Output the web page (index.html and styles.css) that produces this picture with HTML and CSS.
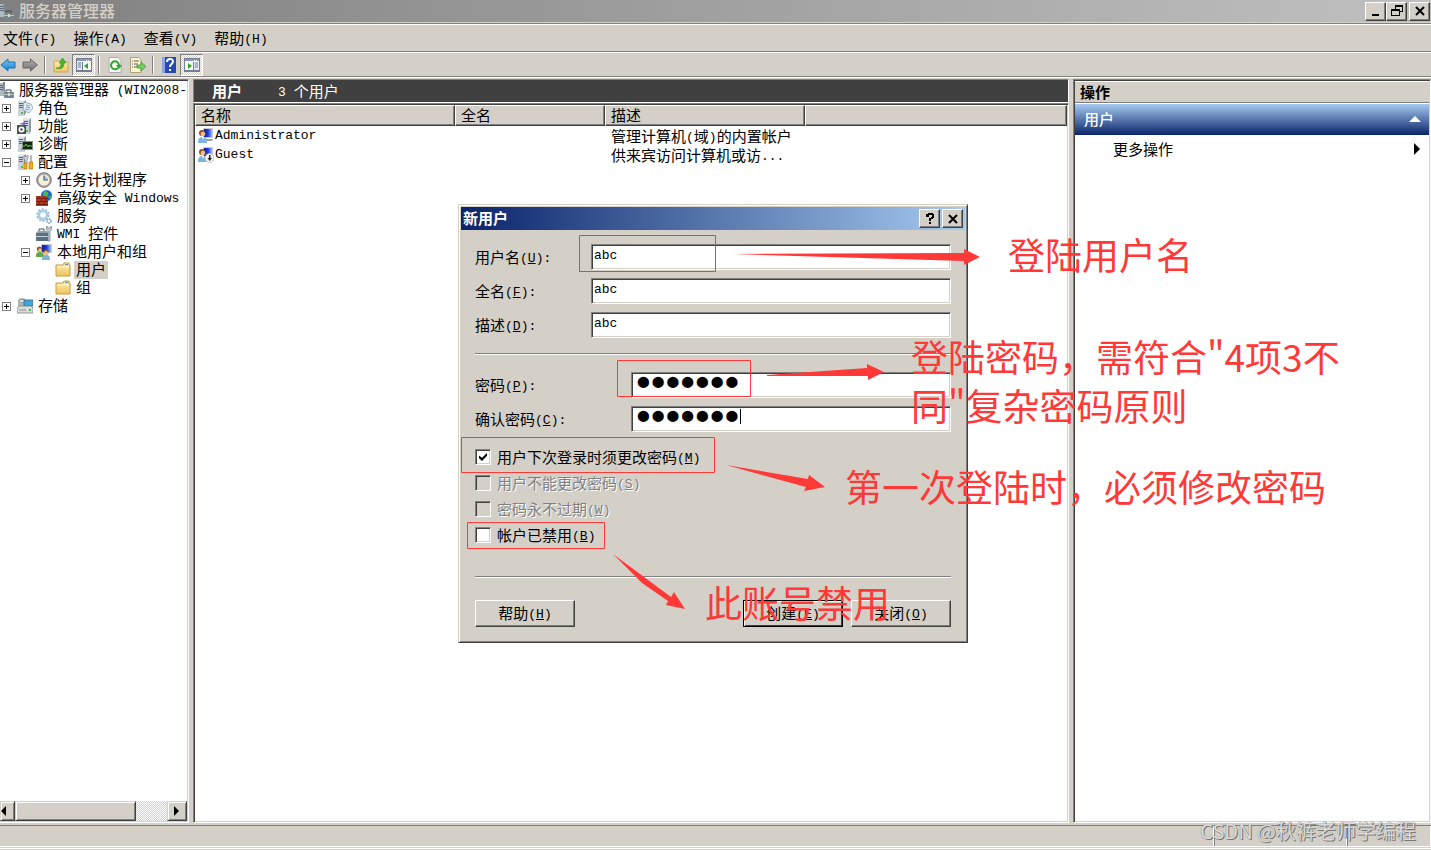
FILE: index.html
```html
<!DOCTYPE html>
<html lang="zh-CN">
<head>
<meta charset="utf-8">
<title>服务器管理器</title>
<link rel="stylesheet" href="styles.css">
</head>
<body>
<svg class="defs" aria-hidden="true">
  <defs>
    <linearGradient id="gBlue" x1="0" y1="0" x2="0" y2="1"><stop offset="0" stop-color="#7cc8f4"/><stop offset="1" stop-color="#0b7fd4"/></linearGradient>
    <linearGradient id="gGray" x1="0" y1="0" x2="0" y2="1"><stop offset="0" stop-color="#b4b4b4"/><stop offset="1" stop-color="#6c6c6c"/></linearGradient>
    <linearGradient id="gFolder" x1="0" y1="0" x2="0" y2="1"><stop offset="0" stop-color="#fdeeb0"/><stop offset="1" stop-color="#efc460"/></linearGradient>
    <linearGradient id="gScreen" x1="0" y1="0" x2="1" y2="0"><stop offset="0" stop-color="#0a1ca0"/><stop offset=".5" stop-color="#1c3ce0"/><stop offset="1" stop-color="#9cc0f8"/></linearGradient>
    <symbol id="tower" viewBox="0 0 16 16">
      <path d="M1 2l2-2h6v13l-2 3H1z" fill="#8e9aa4"/><path d="M1 2h6v14H1z" fill="#c9d2d8"/><path d="M2 3h4v1H2zM2 5h4v1H2zM2 7h4v1H2z" fill="#5a6872"/><path d="M4 12h2v2H4z" fill="#35d02a"/><path d="M3 0h6l-2 2H1z" fill="#e6ebee"/>
    </symbol>
    <symbol id="manager" viewBox="0 0 16 16">
      <path d="M0 1h7v13H0z" fill="#aeb9c1"/><path d="M1 3h5v1H1zM1 5h5v1H1zM1 7h5v1H1z" fill="#5a6872"/><path d="M5 0h2v9H5z" fill="#7f8c96"/>
      <path d="M8 10V8h5v2" fill="none" stroke="#3f4b54"/><rect x="6" y="10" width="10" height="6" rx="1" fill="#708694"/><path d="M6 12h10v1H6z" fill="#b8c7d0"/><path d="M10 11h2v3h-2z" fill="#e8d8a0"/>
    </symbol>
    <symbol id="person" viewBox="0 0 16 16">
      <path d="M5 0h10v10H5z" fill="#c8ccd4"/><path d="M6 1h8v8H6z" fill="url(#gScreen)"/><path d="M8 11h7l-1 2H8z" fill="#9aa0a8"/>
      <circle cx="4" cy="5" r="3" fill="#8c5424"/><circle cx="5" cy="6" r="2.3" fill="#f0bc8c"/><path d="M0 15c0-5 2-6 4.500-6S9 10 9 15z" fill="#7cb4e0"/><path d="M4 9l1 3 1-3z" fill="#fff"/>
    </symbol>
    <symbol id="folder" viewBox="0 0 16 16">
      <path d="M1 3h7l1-2h5v2h1v11H1z" fill="url(#gFolder)" stroke="#c79a3c"/><path d="M10 2h3v1h-3z" fill="#3b9ae0"/><path d="M2 5h12" stroke="#fff6cf"/>
    </symbol>
    <symbol id="console" viewBox="0 0 16 16">
      <path d="M0 2h16v12H0z" fill="#f7f9fc" stroke="#71809a" stroke-width="2"/><path d="M1 2h14v2H1z" fill="#8798b4"/><path d="M10 3h1v1h-1zM12 3h1v1h-1z" fill="#fff"/>
    </symbol>
  </defs>
</svg>

<div class="app">
  <header class="titlebar">
    <svg class="icon root-icon"><use href="#manager"/></svg>
    <h1>服务器管理器</h1>
    <div class="winbtns">
      <button class="cap" aria-label="最小化"><svg viewBox="0 0 12 12"><path d="M2 9h7v2H2z"/></svg></button>
      <button class="cap" aria-label="还原"><svg viewBox="0 0 12 12"><path d="M4 0h8v7H9V6h2V2H5v2H4zM0 4h9v7H0zm1 2v4h7V6z" fill-rule="evenodd"/></svg></button>
      <button class="cap cap-close" aria-label="关闭"><svg viewBox="0 0 12 12"><path d="M2 2l8 8M10 2l-8 8" stroke="#000" stroke-width="2"/></svg></button>
    </div>
  </header>

  <nav class="menubar">
    <button>文件<i>(F)</i></button><button>操作<i>(A)</i></button><button>查看<i>(V)</i></button><button>帮助<i>(H)</i></button>
  </nav>

  <div class="toolbar">
    <button class="tool first" aria-label="后退"><svg class="icon" viewBox="0 0 16 16"><path d="M1 8l7-6v3h7v6H8v3z" fill="url(#gBlue)" stroke="#1e6fb4"/></svg></button>
    <button class="tool" aria-label="前进"><svg class="icon" viewBox="0 0 16 16"><path d="M15.500 8l-7-6v3H1v6h7.500v3z" fill="url(#gGray)" stroke="#686868"/></svg></button>
    <span class="sep"></span>
    <button class="tool" aria-label="上移一级"><svg class="icon" viewBox="0 0 16 16"><path d="M1 4h6l1 1h7v10H1z" fill="url(#gFolder)" stroke="#d0a550"/><path d="M3 11c4 0 5-2 5-5H6l3.500-5L13 6h-2c0 5-3 7-8 5z" fill="#45b82c" stroke="#278414" stroke-width=".5"/></svg></button>
    <button class="tool on" aria-label="显示控制台树"><svg class="icon" viewBox="0 0 16 16"><use href="#console"/><path d="M1 5h5v8H1z" fill="#dfe6f0"/><path d="M2 6h3M2 8h3M2 10h3M6.500 5v8" stroke="#71809a"/><path d="M12 6v6L8 9z" fill="#35a51d"/></svg></button>
    <span class="sep"></span>
    <button class="tool" aria-label="刷新"><svg class="icon" viewBox="0 0 16 16"><path d="M2 .5h9l3 3v12H2z" fill="#fbfbfb" stroke="#aaa"/><path d="M11 11a4 4 0 1 1 1-3" fill="none" stroke="#2fa52a" stroke-width="2"/><path d="M9 8h6l-3 4z" fill="#2fa52a"/></svg></button>
    <button class="tool" aria-label="导出列表"><svg class="icon" viewBox="0 0 16 16"><path d="M.5.5H9l2 2v13H.5z" fill="#fdf6cf" stroke="#a9a17a"/><path d="M2 4h1M2 7h1M2 10h1M4 4h5M4 7h4M4 10h4" stroke="#5b5b66"/><path d="M7 8h4V5l5 4.500-5 4.500v-3H7z" fill="#6fd45a" stroke="#2f9a20" stroke-width=".7"/></svg></button>
    <span class="sep"></span>
    <button class="tool" aria-label="帮助"><svg class="icon" viewBox="0 0 16 16"><path d="M1 0h14v16H1z" fill="#2448b4"/><path d="M1 0h3v16H1z" fill="#8ca4e4"/><path d="M6 5c0-4 6-4 6-.5C12 7 9 7 9 10" fill="none" stroke="#fff" stroke-width="2"/><path d="M8 12h2v2H8z" fill="#fff"/></svg></button>
    <button class="tool on" aria-label="显示操作窗格"><svg class="icon" viewBox="0 0 16 16"><use href="#console"/><path d="M10 5h5v8h-5z" fill="#dfe6f0"/><path d="M11 6h3M11 8h3M11 10h3M9.500 5v8" stroke="#71809a"/><path d="M4 6v6l4-3z" fill="#35a51d"/></svg></button>
  </div>

  <main class="panes">
    <section class="pane tree-pane">
      <div class="tree">
        <div class="node"><svg class="icon root-icon"><use href="#manager"/></svg><span>服务器管理器<i> (WIN2008-</i></span></div>
        <ul>
          <li><div class="node"><button class="exp" aria-label="展开"></button><svg class="icon" viewBox="0 0 16 16"><use href="#tower"/><path d="M7 2l7 2 2 4-4 5-6-3z" fill="#e4eff8" stroke="#7c9cb8" stroke-width=".8"/><path d="M9 5l4 1M9 7l4 1M8 9l4 1" stroke="#5c8cb8" stroke-width=".8"/></svg><span>角色</span></div></li>
          <li><div class="node"><button class="exp" aria-label="展开"></button><svg class="icon" viewBox="0 0 16 16"><use href="#tower" x="5"/><path d="M0 7h9v9H0z" fill="#4a4f58"/><circle cx="4.500" cy="11.500" r="3" fill="#fff"/><circle cx="4.500" cy="11.500" r="1.200" fill="#4a4f58"/><path d="M2 6l6-2v3" fill="#7c64b8"/></svg><span>功能</span></div></li>
          <li><div class="node"><button class="exp" aria-label="展开"></button><svg class="icon" viewBox="0 0 16 16"><use href="#tower"/><path d="M5 5h11v9H5z" fill="#8b8f80"/><path d="M6 6h9v7H6z" fill="#142012"/><path d="M6 10h2l1-2 2 3 1-2 1 1h2" fill="none" stroke="#4fd03a"/></svg><span>诊断</span></div></li>
          <li><div class="node"><button class="exp open" aria-label="折叠"></button><svg class="icon" viewBox="0 0 16 16"><use href="#tower"/><path d="M7 1l2 2 2-2v4l-1 1v4H8V6L7 5z" fill="#d0d4d8" stroke="#70767c" stroke-width=".6"/><path d="M13 1h2v8h-2z" fill="#b8bcc0"/><path d="M7 9h3v6H7zM12 8h4v7h-4z" fill="#f0b018" stroke="#a86c08" stroke-width=".6"/></svg><span>配置</span></div>
            <ul>
              <li><div class="node"><button class="exp" aria-label="展开"></button><svg class="icon" viewBox="0 0 16 16"><circle cx="8" cy="8" r="7.300" fill="#a8a8a8" stroke="#777"/><circle cx="8" cy="8" r="5.500" fill="#f4f0dc"/><path d="M8 8h4a4 4 0 0 0-4-4z" fill="#a8ccec"/><path d="M8 3.500V8h4" fill="none" stroke="#4c5c70" stroke-width="1.200"/></svg><span>任务计划程序</span></div></li>
              <li><div class="node"><button class="exp" aria-label="展开"></button><svg class="icon" viewBox="0 0 16 16"><circle cx="10.500" cy="5.500" r="5.500" fill="#1c68c8"/><path d="M8 1c3 0 5 1 4 4s-4 3-5 0zM12 7l4-2-1 4z" fill="#4cb848"/><path d="M0 6h10l2 2v8H0z" fill="#b03c24"/><path d="M0 8.500h12M0 11.500h12M0 14.500h12M3 6v2M8 6v2M5 9v2M10 9v2M3 12v2M8 12v2" stroke="#6c1c10" stroke-width=".9"/></svg><span>高级安全<i> Windows</i></span></div></li>
              <li><div class="node"><b class="noexp"></b><svg class="icon" viewBox="0 0 16 16"><circle cx="7" cy="7" r="5.500" fill="none" stroke="#9cc0d8" stroke-width="2.500" stroke-dasharray="2.200 1.200"/><circle cx="7" cy="7" r="4" fill="none" stroke="#a8cce0" stroke-width="2.500"/><circle cx="13" cy="13" r="2" fill="none" stroke="#90b0c8" stroke-width="1.800" stroke-dasharray="1.500 .6"/></svg><span>服务</span></div></li>
              <li><div class="node"><b class="noexp"></b><svg class="icon" viewBox="0 0 16 16"><path d="M0 7h12v8H0z" fill="#5c6f80"/><path d="M0 7l2-2h9l1 2z" fill="#90a0ae"/><path d="M3 5V3h5v2" fill="none" stroke="#44525e"/><path d="M0 10h12v1H0z" fill="#c8d4dc"/><path d="M11 0l1 2h2l1-2 1 3-2 2v10h-2V5l-2-2z" fill="#c4ccd4" stroke="#5c6c80" stroke-width=".6"/></svg><span><i>WMI </i>控件</span></div></li>
              <li><div class="node"><button class="exp open" aria-label="折叠"></button><svg class="icon" viewBox="0 0 16 16"><path d="M5 0h11v9H5z" fill="#c8ccd4"/><path d="M6 1h9v7H6z" fill="url(#gScreen)"/><circle cx="3.500" cy="5" r="2.600" fill="#8c5424"/><circle cx="4" cy="6" r="1.800" fill="#f0bc8c"/><path d="M0 13c0-4 1-5 3.500-5S8 9 8 13z" fill="#60a840"/><circle cx="10" cy="8" r="2.600" fill="#8c5424"/><circle cx="10" cy="9" r="2" fill="#f0bc8c"/><path d="M6 16c0-4 1-5 4-5s4 1 4 5z" fill="#7cb4e0"/></svg><span>本地用户和组</span></div>
                <ul>
                  <li><div class="node"><b class="noexp"></b><svg class="icon"><use href="#folder"/></svg><span class="selected">用户</span></div></li>
                  <li><div class="node"><b class="noexp"></b><svg class="icon"><use href="#folder"/></svg><span>组</span></div></li>
                </ul>
              </li>
            </ul>
          </li>
          <li><div class="node"><button class="exp" aria-label="展开"></button><svg class="icon" viewBox="0 0 16 16"><path d="M1 3c0-4 8-4 8 0v6H1z" fill="#b0b8bc"/><ellipse cx="5" cy="3" rx="3" ry="1.500" fill="#e8ecee" stroke="#6c7478" stroke-width=".6"/><path d="M7 2h9v6H7z" fill="#38a8dc" stroke="#48606c" stroke-width=".8"/><path d="M0 10l2-2h12l2 2v5H0z" fill="#d8dcdc" stroke="#7c8484" stroke-width=".8"/><path d="M2 12h7" stroke="#8c9494"/><path d="M12 11h2v2h-2z" fill="#35d02a"/></svg><span>存储</span></div></li>
        </ul>
      </div>
      <div class="hscroll">
        <button class="sb sb-left" aria-label="向左滚动"><svg viewBox="0 0 6 10"><path d="M5 0v10L0 5z"/></svg></button>
        <div class="thumb"></div><div class="track"></div>
        <button class="sb" aria-label="向右滚动"><svg viewBox="0 0 6 10"><path d="M0 0v10l5-5z"/></svg></button>
      </div>
    </section>

    <section class="center">
      <div class="center-head"><strong>用户</strong><span><i>3 </i>个用户</span></div>
      <div class="pane list">
        <table>
          <colgroup><col class="c-name"><col class="c-full"><col class="c-desc"><col></colgroup>
          <thead><tr><th>名称</th><th>全名</th><th>描述</th><th></th></tr></thead>
          <tbody>
            <tr><td><svg class="icon"><use href="#person"/></svg><i>Administrator</i></td><td></td><td>管理计算机<i>(</i>域<i>)</i>的内置帐户</td><td></td></tr>
            <tr><td><svg class="icon" viewBox="0 0 16 16"><use href="#person"/><circle cx="11.500" cy="11" r="4.500" fill="#f4f4f4" stroke="#aaa" stroke-width=".6"/><path d="M11 8h1.500v3H14l-2.300 3L9.500 11H11z" fill="#222"/></svg><i>Guest</i></td><td></td><td>供来宾访问计算机或访<i>...</i></td><td></td></tr>
          </tbody>
        </table>
      </div>
    </section>

    <aside class="pane actions">
      <h2>操作</h2>
      <button class="group"><span>用户</span><svg class="up" viewBox="0 0 12 6"><path d="M6 0l6 6H0z"/></svg></button>
      <button class="more"><span>更多操作</span><svg class="right" viewBox="0 0 6 12"><path d="M0 0v12l6-6z"/></svg></button>
    </aside>
  </main>

  <footer class="status"><span></span><span></span><span></span></footer>
</div>

<form class="dialog" role="dialog" aria-label="新用户">
  <div class="dlg-title">
    <h2>新用户</h2>
    <button type="button" class="cap" aria-label="帮助"><svg viewBox="0 0 12 12"><path d="M2 1h2V0h5v1h1v4H9v1H7v2H5V5h2V4h1V2H5v2H2zM5 9h2v2H5z"/></svg></button>
    <button type="button" class="cap" aria-label="关闭"><svg viewBox="0 0 12 12"><path d="M2 2l8 8M10 2l-8 8" stroke="#000" stroke-width="2"/></svg></button>
  </div>
  <div class="dlg-body">
    <div class="field"><label for="user">用户名<i>(<u>U</u>):</i></label><input id="user" type="text" value="abc"></div>
    <div class="field"><label for="full">全名<i>(<u>F</u>):</i></label><input id="full" type="text" value="abc"></div>
    <div class="field"><label for="desc">描述<i>(<u>D</u>):</i></label><input id="desc" type="text" value="abc"></div>
    <hr>
    <div class="field pw"><label for="pass">密码<i>(<u>P</u>):</i></label><input id="pass" type="password" value="abcdefg"></div>
    <div class="field pw"><label for="pass2">确认密码<i>(<u>C</u>):</i></label><input id="pass2" type="password" value="abcdefg"><span class="caret"></span></div>
    <div class="checks">
      <label><input type="checkbox" checked><span>用户下次登录时须更改密码<i>(<u>M</u>)</i></span></label>
      <label class="off"><input type="checkbox" disabled><span>用户不能更改密码<i>(<u>S</u>)</i></span></label>
      <label class="off"><input type="checkbox" disabled><span>密码永不过期<i>(<u>W</u>)</i></span></label>
      <label><input type="checkbox"><span>帐户已禁用<i>(<u>B</u>)</i></span></label>
    </div>
    <hr>
    <div class="buttons">
      <button type="button" class="btn">帮助<i>(<u>H</u>)</i></button>
      <button type="button" class="btn default">创建<i>(<u>E</u>)</i></button>
      <button type="button" class="btn">关闭<i>(<u>O</u>)</i></button>
    </div>
  </div>
</form>

<div class="notes">
  <svg class="marks" viewBox="0 0 1431 850">
    <g fill="none" stroke="#ff3838">
      <path d="M579.500 235.500h136v36h-136z"/><path d="M617.500 360.500h133v36h-133z"/><path d="M461.500 437.500h253v35h-253z"/><path d="M467.500 522.500h137v26h-137z"/>
    </g>
    <g fill="#ff3838">
      <path d="M733 254L964 253V249L980 257L964 265V261Z"/>
      <path d="M767 375L867 368V364L884 372L868 380V376L767 376Z"/>
      <path d="M726 465L808 479L809 475L825 487L804 491L806 487Z"/>
      <path d="M613 554L671 597L674 592L685 609L666 605L668 601L642 583Z"/>
    </g>
  </svg>
  <p class="note n1">登陆用户名</p>
  <p class="note n2">登陆密码，需符合"4项3不<br>同"复杂密码原则</p>
  <p class="note n3">第一次登陆时，必须修改密码</p>
  <p class="note n4">此账号禁用</p>
  <p class="watermark">CSDN @秋裤老师学编程</p>
</div>
</body>
</html>
```
FILE: styles.css
```css
:root {
  --face: #d4d0c8;
  --shadow: #808080;
  --dark: #404040;
  --red: #ff3838;
  --cjk: "Noto Sans CJK SC", sans-serif;
}
* { box-sizing: border-box; }
body {
  margin: 0;
  background: var(--face);
  color: #000;
  font: 15px/18px var(--cjk);
  overflow: hidden;
}
h1, h2, p, ul { margin: 0; padding: 0; }
ul { list-style: none; }
button { padding: 0; border: 0; background: none; color: inherit; font: inherit; }
i { font: 13px/14px "Liberation Mono", monospace; vertical-align: 1px; white-space: pre; }
.defs { position: absolute; width: 0; height: 0; }
.icon { display: block; flex: none; width: 16px; height: 16px; }
.root-icon { margin-left: -2px; }

.app { display: flex; flex-direction: column; height: 100vh; }

.titlebar {
  display: flex;
  align-items: center;
  gap: 5px;
  height: 22px;
  background: linear-gradient(90deg, #808080, #c0c0c0);
}
.titlebar h1 { flex: 1; padding-bottom: 2px; color: var(--face); font-size: 16px; line-height: 18px; font-weight: 500; }
.winbtns { display: flex; padding-right: 1px; }
.cap {
  display: grid;
  place-items: center;
  width: 21px;
  height: 19px;
  background: var(--face);
  border: 1px solid;
  border-color: #fff var(--dark) var(--dark) #fff;
  box-shadow: inset -1px -1px var(--shadow);
}
.cap svg { width: 12px; height: 12px; }
.cap-close { margin-left: 2px; }

.menubar {
  display: flex;
  gap: 17px;
  height: 29px;
  margin-top: 1px;
  padding-left: 3px;
  border-top: 1px solid var(--shadow);
  border-bottom: 1px solid var(--shadow);
  box-shadow: inset 0 1px #fff;
}
.toolbar {
  display: flex;
  align-items: center;
  height: 25px;
  border-top: 1px solid #fff;
  border-bottom: 1px solid var(--shadow);
  box-shadow: 0 1px #fff;
}
.tool { display: grid; place-items: center; width: 23px; height: 22px; }
.tool.first { width: 18px; padding-right: 6px; }
.tool.on {
  border: 1px solid;
  border-color: var(--shadow) #fff #fff var(--shadow);
  background: repeating-conic-gradient(#fff 0 25%, var(--face) 0 50%) 0 0 / 2px 2px;
}
.sep { width: 2px; height: 18px; margin: 0 3px; border-left: 1px solid var(--shadow); border-right: 1px solid #fff; }

.panes { flex: 1; display: flex; gap: 4px; min-height: 0; margin-top: 2px; }
.pane {
  background: #fff;
  border: 1px solid;
  border-color: var(--shadow) #fff #fff var(--shadow);
  box-shadow: inset 1px 1px var(--dark), inset -1px -1px var(--face);
  padding: 1px;
}
.tree-pane { display: flex; flex-direction: column; width: 189px; padding-left: 0; border-left: 0; box-shadow: inset 0 1px var(--dark), inset -1px -1px var(--face); }
.tree { flex: 1; overflow: hidden; white-space: nowrap; }
.tree ul ul { padding-left: 19px; }
.node { display: flex; align-items: center; gap: 5px; height: 18px; padding-left: 2px; }
.node span { padding-bottom: 2px; line-height: 16px; }
.tree > .node { padding-left: 0; }
.exp, .noexp { flex: none; width: 9px; height: 9px; margin-right: 1px; }
.exp {
  border: 1px solid var(--shadow);
  background:
    linear-gradient(#000, #000) 50% 50% / 5px 1px no-repeat,
    linear-gradient(#000, #000) 50% 50% / 1px 5px no-repeat;
}
.exp.open { background: linear-gradient(#000, #000) 50% 50% / 5px 1px no-repeat; }
.node .selected { margin-left: -2px; padding: 0 2px 2px; background: var(--face); }

.hscroll { display: flex; height: 20px; }
.sb, .thumb {
  background: var(--face);
  border: 1px solid;
  border-color: var(--face) var(--dark) var(--dark) var(--face);
  box-shadow: inset 1px 1px #fff, inset -1px -1px var(--shadow);
}
.sb { display: grid; place-items: center; flex: none; width: 20px; }
.sb svg { width: 6px; height: 10px; }
.sb-left { width: 15px; padding-right: 8px; }
.thumb { flex: 121; }
.track { flex: 31; background: repeating-conic-gradient(#fff 0 25%, var(--face) 0 50%) 0 0 / 2px 2px; }

.center { flex: 1; display: flex; flex-direction: column; min-width: 0; }
.center-head {
  display: flex;
  align-items: center;
  gap: 36px;
  height: 24px;
  padding-left: 18px;
  background: var(--dark);
  color: #fff;
  border: 1px solid;
  border-color: var(--shadow) #fff #fff var(--shadow);
}
.list { flex: 1; }
table { width: 100%; border-spacing: 0; table-layout: fixed; }
.c-name { width: 260px; }
.c-full { width: 150px; }
.c-desc { width: 200px; }
th {
  height: 21px;
  padding: 0 5px 2px;
  background: var(--face);
  border: 1px solid;
  border-color: #fff var(--dark) var(--dark) #fff;
  box-shadow: inset -1px -1px var(--shadow);
  font-weight: 400;
  line-height: 17px;
  text-align: left;
}
td { height: 19px; padding: 0 6px; line-height: 18px; white-space: nowrap; }
td:first-child { display: flex; align-items: center; padding: 0 3px; gap: 1px; }

.actions { width: 358px; }
.actions h2 {
  height: 22px;
  padding-left: 5px;
  background: var(--face);
  border-top: 1px solid #fff;
  border-bottom: 1px solid var(--shadow);
  font-size: 15px;
  line-height: 20px;
  font-weight: 700;
}
.group, .more { display: flex; align-items: center; justify-content: space-between; width: 100%; }
.group {
  height: 31px;
  margin-top: 1px;
  padding: 0 8px 2px 9px;
  background: linear-gradient(#a6caf0, #0a246a);
  color: #fff;
  font-weight: 500;
}
.up { width: 12px; height: 6px; fill: #fff; }
.more { height: 28px; padding: 0 9px 0 38px; }
.right { width: 6px; height: 12px; }

.status {
  display: flex;
  height: 22px;
  margin: 2px 0 3px;
  border-top: 1px solid var(--shadow);
  border-bottom: 1px solid #fff;
  box-shadow: 0 1px var(--face), 0 2px #fff;
}
.status span { width: 133px; border-right: 1px solid #fff; box-shadow: inset 1px 0 var(--shadow); }
.status span:first-child { flex: 1; box-shadow: none; }
.status span:last-child { width: 84px; }

.dialog {
  position: absolute;
  left: 458px;
  top: 204px;
  width: 510px;
  padding: 2px;
  background: var(--face);
  border: 1px solid;
  border-color: var(--face) var(--dark) var(--dark) var(--face);
  box-shadow: inset 1px 1px #fff, inset -1px -1px var(--shadow);
}
.dlg-title {
  display: flex;
  align-items: center;
  gap: 2px;
  height: 23px;
  padding: 0 2px;
  background: linear-gradient(90deg, #0a246a, #a6caf0);
}
.dlg-title h2 { flex: 1; padding-bottom: 2px; color: #fff; font-size: 15px; line-height: 18px; font-weight: 700; }
.dlg-body { padding: 14px 14px 13px; }
.field { position: relative; display: flex; align-items: center; margin-bottom: 8px; }
.field label { width: 116px; }
.field.pw label { width: 156px; }
.field input {
  flex: 1;
  min-width: 0;
  height: 26px;
  padding: 0 2px 3px;
  background: #fff;
  border: 1px solid;
  border-color: var(--shadow) #fff #fff var(--shadow);
  box-shadow: inset 1px 1px var(--dark), inset -1px -1px var(--face);
  color: #000;
  font: 13px/20px "Liberation Mono", monospace;
  outline: 0;
}
.field.pw input { padding-left: 4px; font: 25px/20px "DejaVu Sans", sans-serif; -webkit-text-stroke: 4px #000; }
.caret { position: absolute; left: 265px; top: 3px; width: 1px; height: 15px; background: #000; }
hr { height: 2px; margin: 0; border: 0; border-top: 1px solid var(--shadow); border-bottom: 1px solid #fff; }
.field + hr { margin: 15px 0 17px; }
.checks { display: grid; grid-auto-rows: 26px; padding: 4px 0 28px; }
.checks label { display: flex; align-items: center; gap: 6px; }
.checks input {
  appearance: none;
  width: 16px;
  height: 16px;
  margin: 0;
  background: #fff;
  border: 1px solid;
  border-color: var(--shadow) #fff #fff var(--shadow);
  box-shadow: inset 1px 1px var(--dark), inset -1px -1px var(--face);
}
.checks input:checked {
  display: grid;
  place-items: center;
}
.checks input:checked::before {
  content: "";
  width: 8px;
  height: 8px;
  background: #000;
  clip-path: polygon(0 30%, 38% 60%, 100% 0, 100% 35%, 38% 100%, 0 65%);
}
.checks input:disabled { background: var(--face); }
.off { color: var(--shadow); text-shadow: 1px 1px #fff; }
.buttons { display: flex; gap: 8px; margin-top: 22px; }
.btn {
  width: 100px;
  height: 27px;
  padding-bottom: 2px;
  background: var(--face);
  border: 1px solid;
  border-color: #fff var(--dark) var(--dark) #fff;
  box-shadow: inset -1px -1px var(--shadow);
}
.btn:first-child { margin-right: auto; }
.btn.default { border-color: #000; box-shadow: inset 1px 1px #fff, inset -1px -1px var(--dark); }

.notes { position: absolute; inset: 0; overflow: hidden; pointer-events: none; }
.marks { position: absolute; left: 0; top: 0; width: 1431px; height: 850px; }
.note { position: absolute; color: var(--red); font-size: 37px; line-height: 49px; white-space: nowrap; }
.n1 { left: 1008px; top: 230px; }
.n2 { left: 911px; top: 332px; }
.n3 { left: 845px; top: 462px; }
.n4 { left: 705px; top: 578px; }
.watermark {
  position: absolute;
  right: 15px;
  bottom: 5px;
  color: #dedbd6;
  font-size: 20px;
  line-height: 28px;
  text-shadow: 1px 1px #777, 0 0 1px #777;
}
```
